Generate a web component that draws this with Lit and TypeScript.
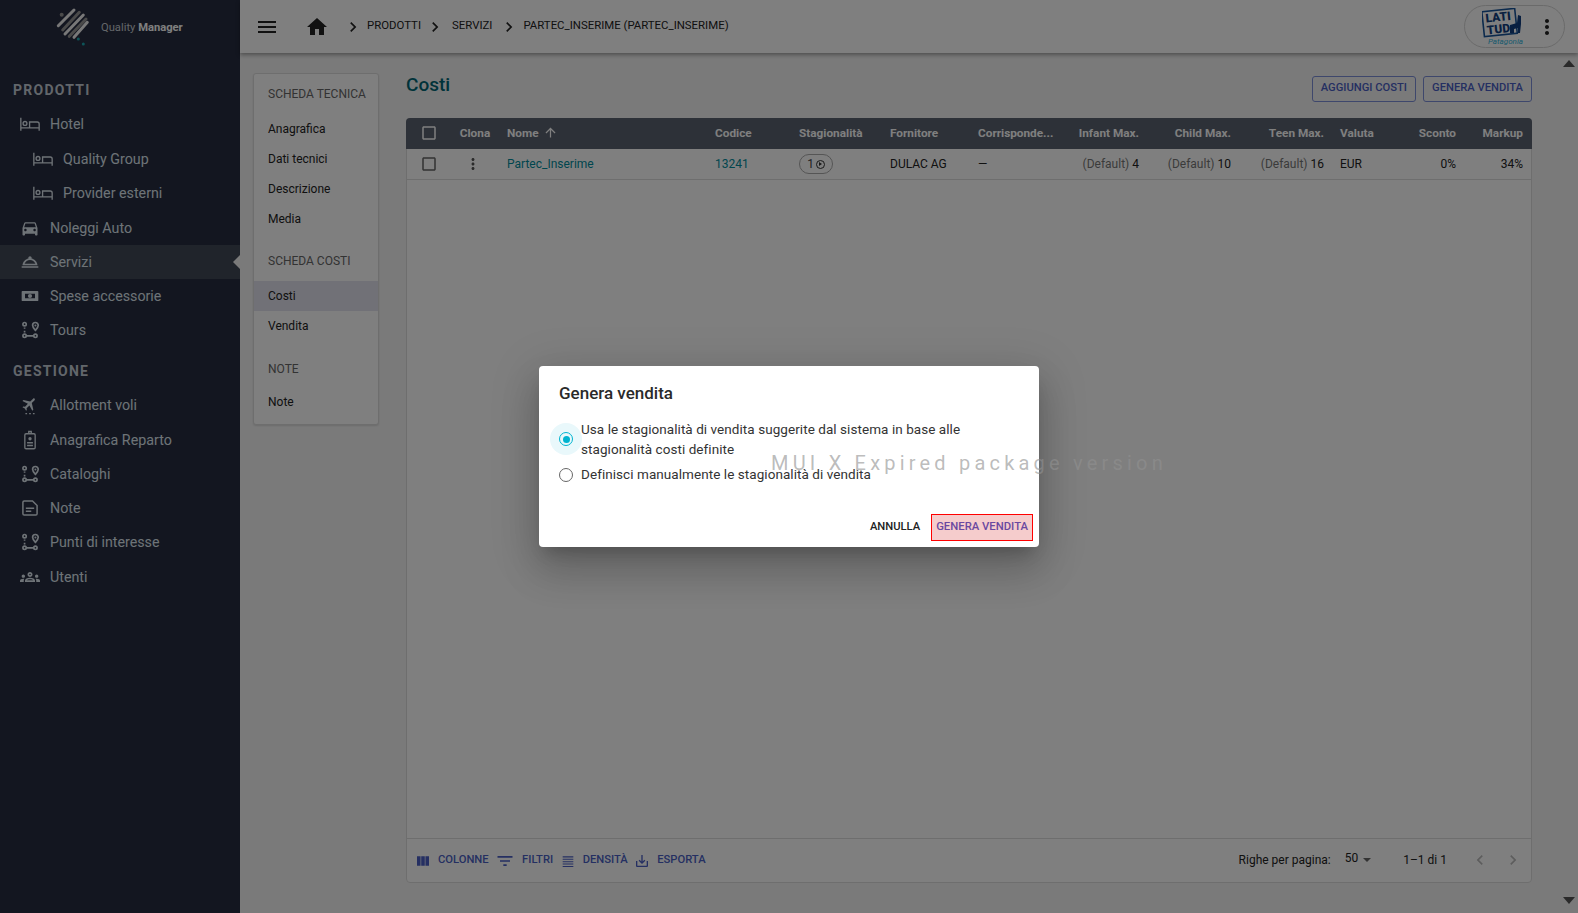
import { LitElement, html, css, svg } from 'lit';
import { customElement } from 'lit/decorators.js';

const P = {
    menu: 'M3 18h18v-2H3v2zm0-5h18v-2H3v2zm0-7v2h18V6H3z',
    home: 'M10 20v-6h4v6h5v-8h3L12 3 2 12h3v8z',
    chevron: 'M10 6 8.59 7.41 13.17 12l-4.58 4.59L10 18l6-6z',
    more: 'M12 8c1.1 0 2-.9 2-2s-.9-2-2-2-2 .9-2 2 .9 2 2 2zm0 2c-1.1 0-2 .9-2 2s.9 2 2 2 2-.9 2-2-.9-2-2-2zm0 6c-1.1 0-2 .9-2 2s.9 2 2 2 2-.9 2-2-.9-2-2-2z',
    check: 'M19 5v14H5V5h14m0-2H5c-1.1 0-2 .9-2 2v14c0 1.1.9 2 2 2h14c1.1 0 2-.9 2-2V5c0-1.1-.9-2-2-2z',
    up: 'M4 12l1.41 1.41L11 7.83V20h2V7.83l5.58 5.59L20 12l-8-8-8 8z',
    columns: 'M14.67 5v14H9.33V5h5.34zm1 14H21V5h-5.33v14zm-7.34 0V5H3v14h5.33z',
    filter: 'M10 18h4v-2h-4v2zM3 6v2h18V6H3zm3 7h12v-2H6v2z',
    density: 'M4 5h16v1.6H4zM4 8.6h16v1.6H4zM4 12.2h16v1.6H4zM4 15.8h16v1.6H4zM4 19.4h16V21H4z',
    exportIcon: 'M19 12v7H5v-7H3v7c0 1.1.9 2 2 2h14c1.1 0 2-.9 2-2v-7h-2zm-6 .67l2.59-2.58L17 11.5l-5 5-5-5 1.41-1.41L11 12.67V3h2z',
    car: 'M18.92 6.01C18.72 5.42 18.16 5 17.5 5h-11c-.66 0-1.21.42-1.42 1.01L3 12v8c0 .55.45 1 1 1h1c.55 0 1-.45 1-1v-1h12v1c0 .55.45 1 1 1h1c.55 0 1-.45 1-1v-8l-2.08-5.99zM6.5 16c-.83 0-1.5-.67-1.5-1.5S5.67 13 6.5 13s1.5.67 1.5 1.5S7.33 16 6.5 16zm11 0c-.83 0-1.5-.67-1.5-1.5s.67-1.5 1.5-1.5 1.5.67 1.5 1.5-.67 1.5-1.5 1.5zM5 11l1.5-4.5h11L19 11H5z',
    service: 'M22 17H2v2h20v-2zM21 16c-.27-4.07-3.25-7.4-7.16-8.21.1-.24.16-.51.16-.79 0-1.1-.9-2-2-2s-2 .9-2 2c0 .28.06.55.16.79C6.25 8.6 3.27 11.93 3 16h18zm-9-6.42c2.95 0 5.47 1.83 6.5 4.42h-13c1.03-2.59 3.55-4.42 6.5-4.42z',
    money: 'M3 6h18a1 1 0 0 1 1 1v10a1 1 0 0 1-1 1H3a1 1 0 0 1-1-1V7a1 1 0 0 1 1-1zm3 3.2v5.6h12V9.2H6zM12 9.5a2.5 2.5 0 1 1 0 5 2.5 2.5 0 0 1 0-5z',
    plane: 'M21 16v-2l-8-5V3.5c0-.83-.67-1.5-1.5-1.5S10 2.67 10 3.5V9l-8 5v2l8-2.5V19l-2 1.5V22l3.5-1 3.5 1v-1.5L13 19v-5.5l8 2.5z',
    groups: 'M4 13c1.1 0 2-.9 2-2s-.9-2-2-2-2 .9-2 2 .9 2 2 2zm1.13 1.1c-.37-.06-.74-.1-1.13-.1-.99 0-1.93.21-2.78.58C.48 14.9 0 15.62 0 16.43V18h4.5v-1.61c0-.83.23-1.61.63-2.29zM20 13c1.1 0 2-.9 2-2s-.9-2-2-2-2 .9-2 2 .9 2 2 2zm4 3.43c0-.81-.48-1.53-1.22-1.85-.85-.37-1.79-.58-2.78-.58-.39 0-.76.04-1.13.1.4.68.63 1.46.63 2.29V18H24v-1.57zm-7.76-2.78c-1.17-.52-2.61-.9-4.24-.9-1.63 0-3.07.39-4.24.9C6.68 14.13 6 15.21 6 16.39V18h12v-1.61c0-1.18-.68-2.26-1.76-2.74zM8.07 16c.09-.23.13-.39.91-.69.97-.38 1.99-.56 3.02-.56s2.05.18 3.02.56c.77.3.81.46.91.69H8.07zM12 8c.55 0 1 .45 1 1s-.45 1-1 1-1-.45-1-1 .45-1 1-1m0-2c-1.66 0-3 1.34-3 3s1.34 3 3 3 3-1.34 3-3-1.34-3-3-3z',
};

const icon = (d: string, size = 24) => html`<svg width=${size} height=${size} viewBox="0 0 24 24" fill="currentColor"><path fill-rule="evenodd" d=${d}></path></svg>`;

const SIDE_ICONS: Record<string, unknown> = {
    bed: svg`<g fill="none" stroke="currentColor" stroke-width="1.6"><path d="M1 4.500v15.500M1 16.600h22M23 20v-8a2.400 2.400 0 0 0-2.400-2.400H11.500v7"/><circle cx="6" cy="11.300" r="2.300"/></g>`,
    car: svg`<path d=${P.car}/>`,
    service: svg`<path fill-rule="evenodd" d=${P.service}/>`,
    money: svg`<path fill-rule="evenodd" d=${P.money}/>`,
    route: svg`<g fill="none" stroke="currentColor" stroke-width="2"><circle cx="5.500" cy="5" r="2"/><circle cx="5.500" cy="19" r="2"/><circle cx="18.500" cy="19" r="2"/><path d="M5.500 9v1.500M5.500 13v2M8 19h8"/><path d="M18.500 3a3.400 3.400 0 0 1 3.400 3.400c0 2.600-3.400 6-3.400 6s-3.400-3.400-3.400-6A3.400 3.400 0 0 1 18.500 3z"/></g><circle cx="18.500" cy="6.500" r="1.200" fill="currentColor"/>`,
    plane: svg`<g transform="rotate(45 12 10.500) translate(1.500 .5) scale(.88)"><path d=${P.plane}/></g><path d="M6.500 21.500h2v1.500h-2zM11 21.500h2v1.500h-2zM15.500 21.500h2v1.500h-2z"/>`,
    badge: svg`<g fill="none" stroke="currentColor" stroke-width="1.600"><rect x="5.800" y="4.500" width="12.400" height="18" rx="1.500"/><path d="M10.500 4.500V1.800h3v2.700"/></g><circle cx="12" cy="10.500" r="2"/><path d="M8.500 14.500h7v1.600h-7zM8.500 17.800h7v1.600h-7z"/>`,
    note: svg`<path fill="none" stroke="currentColor" stroke-width="1.800" d="M5 3.500h10l5.500 5.500v10a1.500 1.500 0 0 1-1.500 1.500H5A1.500 1.500 0 0 1 3.500 19V5A1.500 1.500 0 0 1 5 3.500z"/><path d="M7 11.500h10v1.800H7zM7 15h6.500v1.800H7z"/>`,
    groups: svg`<path fill-rule="evenodd" d=${P.groups}/>`,
};

type NavItem = { label: string; icon: string; sub?: boolean; active?: boolean };

const PRODOTTI: NavItem[] = [
    { label: 'Hotel', icon: 'bed' },
    { label: 'Quality Group', icon: 'bed', sub: true },
    { label: 'Provider esterni', icon: 'bed', sub: true },
    { label: 'Noleggi Auto', icon: 'car' },
    { label: 'Servizi', icon: 'service', active: true },
    { label: 'Spese accessorie', icon: 'money' },
    { label: 'Tours', icon: 'route' },
];

const GESTIONE: NavItem[] = [
    { label: 'Allotment voli', icon: 'plane' },
    { label: 'Anagrafica Reparto', icon: 'badge' },
    { label: 'Cataloghi', icon: 'route' },
    { label: 'Note', icon: 'note' },
    { label: 'Punti di interesse', icon: 'route' },
    { label: 'Utenti', icon: 'groups' },
];

const COLUMNS = [
    { label: 'Nome', sorted: true },
    { label: 'Codice' },
    { label: 'Stagionalità' },
    { label: 'Fornitore' },
    { label: 'Corrisponde...' },
    { label: 'Infant Max.', right: true },
    { label: 'Child Max.', right: true },
    { label: 'Teen Max.', right: true },
    { label: 'Valuta' },
    { label: 'Sconto', right: true },
    { label: 'Markup', right: true },
];

@customElement('app-root')
export class AppRoot extends LitElement {
    static styles = css`
        :host {
            display: block;
            position: relative;
            height: 913px;
            overflow: hidden;
            font-family: Roboto, 'Noto Sans', sans-serif;
            font-size: 12px;
            color: #222;
            background: #f5f5f5;
        }

        .app {
            display: flex;
            height: 100%;
        }

        /* sidebar */
        .side {
            width: 240px;
            flex: none;
            background: #262c40;
            color: #dde6ee;
            position: relative;
        }
        .brand {
            display: flex;
            align-items: center;
            height: 56px;
            padding-left: 56px;
            gap: 9px;
            font-size: 11.2px;
        }
        .brand b {
            font-weight: 700;
            color: #fff;
        }
        .brand span {
            color: #c8cdd2;
            margin-top: -1px;
        }
        .group {
            height: 34px;
            display: flex;
            align-items: center;
            padding-left: 13px;
            font-size: 14px;
            font-weight: 700;
            letter-spacing: 1.25px;
            color: #c4ccd6;
        }
        .group.first {
            margin-top: 17px;
        }
        .group.first + .nav {
            margin-bottom: 0.5px;
        }
        .group.next {
            margin-top: 6.5px;
        }
        .nav {
            height: 34.3px;
            display: flex;
            align-items: center;
            padding-left: 20px;
            gap: 10px;
            font-size: 14.25px;
            position: relative;
        }
        .nav.sub {
            padding-left: 33px;
        }
        .nav svg {
            flex: none;
            width: 20px;
            height: 20px;
            fill: currentColor;
        }
        .nav.active {
            background: #404856;
        }
        .nav.active::after {
            content: '';
            position: absolute;
            right: 0;
            top: 50%;
            margin-top: -7px;
            border: 7px solid transparent;
            border-right-color: #f5f5f5;
            border-left-width: 0;
        }

        /* topbar */
        .main {
            flex: 1;
            min-width: 0;
            display: flex;
            flex-direction: column;
        }
        .top {
            height: 53px;
            flex: none;
            background: #fff;
            box-shadow: 0 2px 4px rgba(0, 0, 0, 0.35);
            display: flex;
            align-items: center;
            position: relative;
            padding: 0 13px 0 15px;
            font-size: 11.4px;
        }
        .top .menu,
        .top .home {
            display: flex;
        }
        .top .home {
            margin-left: 26px;
            margin-right: 14px;
        }
        .crumb {
            display: flex;
            align-items: center;
            color: #222;
        }
        .crumb span {
            margin-top: -3px;
        }
        .crumb.a {
            margin-right: 4px;
        }
        .crumb.a span {
            margin-left: 4px;
        }
        .crumb.b {
            margin-right: 7px;
        }
        .crumb.b span {
            margin-left: 7px;
        }
        .crumb.c span {
            margin-left: 4px;
        }
        .pill {
            margin-left: auto;
            width: 101px;
            height: 43px;
            border: 1px solid #d5d5d5;
            border-radius: 22px;
            display: flex;
            align-items: center;
            justify-content: space-between;
            padding: 0 5px 0 17px;
            box-sizing: border-box;
        }

        /* page */
        .page {
            flex: 1;
            min-height: 0;
            display: flex;
            padding: 20px 0 30px 13px;
        }
        .tabs {
            width: 126px;
            height: 352px;
            flex: none;
            box-sizing: border-box;
            background: #fff;
            border: 1px solid #ddd;
            border-radius: 3px;
            box-shadow: 0 1px 2px rgba(0, 0, 0, 0.12);
            margin-right: 27px;
        }
        .tabs .head {
            height: 40px;
            padding-left: 14px;
            display: flex;
            align-items: center;
            color: #666;
        }
        .tabs .head.second {
            margin-top: 7px;
        }
        .tabs .head.third {
            margin-top: 8px;
        }
        .tabs .item {
            height: 30px;
            padding-left: 14px;
            display: flex;
            align-items: center;
        }
        .tabs .item.on {
            background: #e2e2ee;
        }
        .tabs .head.third + .item {
            margin-top: -2px;
        }

        .content {
            width: 1126px;
            flex: none;
            display: flex;
            flex-direction: column;
        }
        .bar {
            height: 45px;
            flex: none;
            display: flex;
            align-items: flex-start;
            justify-content: space-between;
            box-sizing: border-box;
            padding-top: 3px;
        }
        h1 {
            margin: -2px 0 0;
            font-size: 19px;
            font-weight: 500;
            line-height: 22px;
            color: #006674;
        }
        .actions {
            display: flex;
            gap: 7px;
        }
        .btn {
            height: 26px;
            box-sizing: border-box;
            border: 1px solid #7d8fd8;
            border-radius: 3px;
            padding: 0 8px 3px;
            display: flex;
            align-items: center;
            font-size: 11.2px;
            font-weight: 500;
            color: #4a5fc4;
        }

        /* data grid */
        .grid {
            flex: 1;
            min-height: 0;
            position: relative;
            display: flex;
            flex-direction: column;
            border: 1px solid #ddd;
            border-radius: 4px;
            background: #fff;
            box-sizing: border-box;
        }
        .cols {
            display: grid;
            grid-template-columns: 44px 48px 208px 84px 91px 88px 89px 88px 92px 93px 62px 70px 67px;
        }
        .gh {
            height: 31px;
            box-sizing: border-box;
            background: #5a6270;
            color: #fff;
            border-radius: 4px 4px 0 0;
            font-size: 11.8px;
            font-weight: 700;
            margin: -1px -1px 0;
            padding: 0 1px 2px;
        }
        .gr {
            height: 30px;
            border-bottom: 1px solid #ddd;
        }
        .cell {
            padding: 0 8px;
            display: flex;
            align-items: center;
            min-width: 0;
            white-space: nowrap;
        }
        .cell.right {
            justify-content: flex-end;
        }
        .cell.center {
            justify-content: center;
            padding: 0;
        }
        .clona {
            padding-right: 3px;
        }
        .rowcheck {
            display: flex;
            color: #666;
        }
        .kebab {
            display: flex;
            color: #555;
            margin-right: 4px;
        }
        .sort {
            margin-left: 4px;
            display: flex;
        }
        a {
            color: #008c9c;
            text-decoration: none;
        }
        .dim {
            color: #777;
            margin-right: 3px;
        }
        .chip {
            display: inline-flex;
            align-items: center;
            justify-content: center;
            gap: 2px;
            width: 34px;
            height: 20px;
            box-sizing: border-box;
            border: 1px solid #aaa;
            border-radius: 10px;
            color: #444;
        }
        .chip i {
            width: 9px;
            height: 9px;
            box-sizing: border-box;
            border: 1px solid #333;
            border-radius: 50%;
            display: flex;
            align-items: center;
            justify-content: center;
        }
        .chip i::after {
            content: '';
            width: 0;
            height: 0;
            border-left: 3px solid #333;
            border-top: 2px solid transparent;
            border-bottom: 2px solid transparent;
        }
        .gbody {
            flex: 1;
        }
        .gfoot {
            height: 43px;
            flex: none;
            border-top: 1px solid #ddd;
            display: flex;
            align-items: center;
            padding: 0 9px 0 8px;
        }
        .tool {
            display: flex;
            align-items: center;
            font-size: 11.2px;
            font-weight: 500;
            color: #4a5fc4;
            margin-right: 6.5px;
            gap: 7px;
        }
        .tool span {
            margin-top: -2px;
        }
        .pager {
            margin-left: auto;
            margin-top: -1px;
            display: flex;
            align-items: center;
        }
        .pager .sel {
            display: flex;
            align-items: center;
            margin: 0 32px 0 14px;
        }
        .pager .sel b {
            font-weight: 400;
            margin-top: -4px;
        }
        .caret {
            width: 0;
            height: 0;
            margin-left: 5px;
            border-left: 4.5px solid transparent;
            border-right: 4.5px solid transparent;
            border-top: 4.5px solid #666;
        }
        .pager .arrows {
            display: flex;
            gap: 13px;
            color: #bbb;
            margin-left: 23px;
            margin-right: -1px;
        }
        .back {
            display: flex;
            transform: scaleX(-1);
        }

        .gutter {
            flex: 1;
            display: flex;
            flex-direction: column;
            justify-content: space-between;
            align-items: flex-end;
            margin: -13px 3px -21px 0;
        }
        .tri {
            width: 0;
            height: 0;
            border-left: 6.5px solid transparent;
            border-right: 6.5px solid transparent;
        }
        .tri.u {
            border-bottom: 7px solid #555;
        }
        .tri.d {
            border-top: 7px solid #555;
        }

        /* modal */
        .overlay {
            position: absolute;
            inset: 0;
            z-index: 5;
            background: rgba(0, 0, 0, 0.5);
            display: flex;
            align-items: center;
            justify-content: center;
        }
        .dialog {
            width: 500px;
            height: 181px;
            box-sizing: border-box;
            background: #fff;
            border-radius: 4px;
            box-shadow: 0 11px 15px -7px rgba(0, 0, 0, 0.2), 0 24px 38px 3px rgba(0, 0, 0, 0.14), 0 9px 46px 8px rgba(0, 0, 0, 0.12);
            display: flex;
            flex-direction: column;
            color: #222;
        }
        .dialog h2 {
            margin: 0;
            height: 53px;
            box-sizing: border-box;
            padding: 16px 0 0 20px;
            font-size: 17px;
            line-height: 22px;
            font-weight: 500;
            color: #2a2a2a;
        }
        .opt {
            display: flex;
            align-items: center;
            padding-left: 11px;
            font-size: 13.5px;
            letter-spacing: 0.06px;
            line-height: 20px;
            color: #333;
        }
        .opt p {
            margin: 0;
            width: 420px;
        }
        .opt + .opt p {
            margin-top: -2px;
        }
        .radio {
            width: 32px;
            height: 32px;
            flex: none;
            border-radius: 50%;
            margin-right: -1px;
            display: flex;
            align-items: center;
            justify-content: center;
        }
        .radio i {
            width: 14px;
            height: 14px;
            box-sizing: border-box;
            border: 1.4px solid #666;
            border-radius: 50%;
            display: flex;
            align-items: center;
            justify-content: center;
        }
        .radio.on {
            background: #e9f8fb;
        }
        .radio.on i {
            border-color: #00b4d0;
        }
        .radio.on i::after {
            content: '';
            width: 7px;
            height: 7px;
            border-radius: 50%;
            background: #00b4d0;
        }
        .foot {
            margin-top: auto;
            display: flex;
            justify-content: flex-end;
            gap: 6px;
            padding: 0 6px 6px;
        }
        .foot div {
            height: 27px;
            padding: 0 5px 2px;
            box-sizing: border-box;
            display: flex;
            align-items: center;
            font-size: 11.2px;
            font-weight: 500;
        }
        .foot .go {
            background: #f5cccc;
            border: 1px solid #f00;
            padding: 0 4px 2px;
            font-size: 11.3px;
            color: #6a48a0;
        }

        .mark {
            position: absolute;
            z-index: 10;
            left: 0;
            right: 0;
            bottom: calc(50% + 26px);
            text-align: center;
            pointer-events: none;
            font-size: 20px;
            letter-spacing: 4.2px;
            color: rgba(145, 145, 145, 0.62);
        }
    `;

    navRow(item: NavItem) {
        return html`<div class="nav ${item.sub ? 'sub' : ''} ${item.active ? 'active' : ''}">
            <svg viewBox="0 0 24 24">${SIDE_ICONS[item.icon]}</svg>${item.label}
        </div>`;
    }

    get brandLogo() {
        return html`<svg width="36" height="44" viewBox="0 0 36 44">
            <g stroke-linecap="round" stroke-width="3">
                <path stroke="#f0f0f0" d="M2.300 19.700 18 4"></path>
                <path stroke="#959595" d="M6.700 24 23.300 6.300"></path>
                <path stroke="#f0f0f0" d="M9 28 27.300 9"></path>
                <path stroke="#959595" d="M13.300 30.300 30 13"></path>
                <path stroke="#f0f0f0" d="M18 31.300 31.300 16.300"></path>
            </g>
            <circle cx="5.700" cy="8.700" r="2" fill="#959595"></circle>
            <circle cx="22.300" cy="33" r="1.500" fill="#1aa8b0"></circle>
            <circle cx="27.300" cy="38" r="1.500" fill="#1aa8b0"></circle>
        </svg>`;
    }

    get partnerLogo() {
        return html`<svg width="44" height="38" viewBox="0 0 44 38">
            <g transform="rotate(-6 18 14)">
                <rect x="1" y="2" width="33" height="25" fill="none" stroke="#18549a" stroke-width="1.600"></rect>
                <text x="4" y="13" font-family="Roboto" font-weight="900" font-size="12" fill="#123f80">LATI</text>
                <text x="4" y="25" font-family="Roboto" font-weight="900" font-size="12" fill="#123f80">TUD</text>
            </g>
            <path fill="#123f80" d="M28 25v-8l7-2 1-8 3 1v8l-1 9h-2v-5l-4 1v4z"></path>
            <text x="6" y="36" font-family="Roboto" font-size="8" font-style="italic" fill="#30b4dc">Patagonia</text>
        </svg>`;
    }

    render() {
        return html`
            <div class="app">
                <aside class="side">
                    <div class="brand">${this.brandLogo}<span>Quality <b>Manager</b></span></div>
                    <div class="group first">PRODOTTI</div>
                    ${PRODOTTI.map((i) => this.navRow(i))}
                    <div class="group next">GESTIONE</div>
                    ${GESTIONE.map((i) => this.navRow(i))}
                </aside>
                <div class="main">
                    <header class="top">
                        <div class="menu">${icon(P.menu)}</div>
                        <div class="home">${icon(P.home)}</div>
                        <div class="crumb a">${icon(P.chevron, 20)}<span>PRODOTTI</span></div>
                        <div class="crumb b">${icon(P.chevron, 20)}<span>SERVIZI</span></div>
                        <div class="crumb c">${icon(P.chevron, 20)}<span>PARTEC_INSERIME (PARTEC_INSERIME)</span></div>
                        <div class="pill">${this.partnerLogo}${icon(P.more)}</div>
                    </header>
                    <div class="page">
                        <nav class="tabs">
                            <div class="head">SCHEDA TECNICA</div>
                            <div class="item">Anagrafica</div>
                            <div class="item">Dati tecnici</div>
                            <div class="item">Descrizione</div>
                            <div class="item">Media</div>
                            <div class="head second">SCHEDA COSTI</div>
                            <div class="item on">Costi</div>
                            <div class="item">Vendita</div>
                            <div class="head third">NOTE</div>
                            <div class="item">Note</div>
                        </nav>
                        <section class="content">
                            <div class="bar">
                                <h1>Costi</h1>
                                <div class="actions">
                                    <div class="btn">AGGIUNGI COSTI</div>
                                    <div class="btn">GENERA VENDITA</div>
                                </div>
                            </div>
                            <div class="grid">
                                <div class="cols gh">
                                    <div class="cell center">${icon(P.check, 18)}</div>
                                    <div class="cell center clona">Clona</div>
                                    ${COLUMNS.map(
                                        (c) => html`<div class="cell ${c.right ? 'right' : ''}">
                                            ${c.label}${c.sorted ? html`<span class="sort">${icon(P.up, 15)}</span>` : ''}
                                        </div>`
                                    )}
                                </div>
                                <div class="cols gr">
                                    <div class="cell center"><span class="rowcheck">${icon(P.check, 18)}</span></div>
                                    <div class="cell center"><span class="kebab">${icon(P.more, 18)}</span></div>
                                    <div class="cell"><a>Partec_Inserime</a></div>
                                    <div class="cell"><a>13241</a></div>
                                    <div class="cell"><span class="chip">1 <i></i></span></div>
                                    <div class="cell">DULAC AG</div>
                                    <div class="cell">—</div>
                                    <div class="cell right"><span class="dim">(Default)</span>4</div>
                                    <div class="cell right"><span class="dim">(Default)</span>10</div>
                                    <div class="cell right"><span class="dim">(Default)</span>16</div>
                                    <div class="cell">EUR</div>
                                    <div class="cell right">0%</div>
                                    <div class="cell right">34%</div>
                                </div>
                                <div class="gbody"></div>
                                <div class="gfoot">
                                    <div class="tool">${icon(P.columns, 16)}<span>COLONNE</span></div>
                                    <div class="tool">${icon(P.filter, 20)}<span>FILTRI</span></div>
                                    <div class="tool">${icon(P.density, 16)}<span>DENSITÀ</span></div>
                                    <div class="tool">${icon(P.exportIcon, 16)}<span>ESPORTA</span></div>
                                    <div class="pager">
                                        Righe per pagina:
                                        <div class="sel"><b>50</b><i class="caret"></i></div>
                                        1–1 di 1
                                        <div class="arrows">
                                            <span class="back">${icon(P.chevron, 20)}</span>
                                            ${icon(P.chevron, 20)}
                                        </div>
                                    </div>
                                </div>
                                <div class="mark">MUI X Expired package version</div>
                            </div>
                        </section>
                        <div class="gutter"><i class="tri u"></i><i class="tri d"></i></div>
                    </div>
                </div>
            </div>
            <div class="overlay">
                <div class="dialog">
                    <h2>Genera vendita</h2>
                    <div class="opt">
                        <div class="radio on"><i></i></div>
                        <p>Usa le stagionalità di vendita suggerite dal sistema in base alle stagionalità costi definite</p>
                    </div>
                    <div class="opt">
                        <div class="radio"><i></i></div>
                        <p>Definisci manualmente le stagionalità di vendita</p>
                    </div>
                    <div class="foot">
                        <div>ANNULLA</div>
                        <div class="go">GENERA VENDITA</div>
                    </div>
                </div>
            </div>
        `;
    }
}
